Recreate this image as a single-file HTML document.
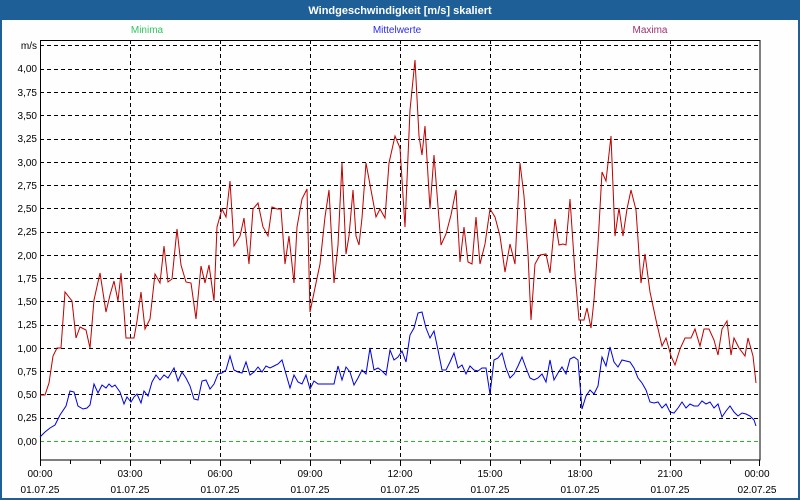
<!DOCTYPE html>
<html><head><meta charset="utf-8"><style>
html,body{margin:0;padding:0;width:800px;height:500px;overflow:hidden;background:#fff;font-family:"Liberation Sans",sans-serif}
</style></head><body>
<svg width="800" height="500" xmlns="http://www.w3.org/2000/svg" font-family="Liberation Sans, sans-serif">
<rect x="0" y="0" width="800" height="500" fill="#1e5f97"/>
<rect x="2" y="20" width="796" height="478" fill="#fdfefd"/>
<text x="400" y="14" fill="#fff" font-size="11" font-weight="bold" text-anchor="middle">Windgeschwindigkeit [m/s] skaliert</text>
<text x="147" y="33" fill="#2fc860" font-size="10" text-anchor="middle">Minima</text>
<text x="397" y="33" fill="#2a2af0" font-size="10" text-anchor="middle">Mittelwerte</text>
<text x="650" y="33" fill="#a03070" font-size="10" text-anchor="middle">Maxima</text>
<g stroke="#000" stroke-width="1" stroke-dasharray="4,3" fill="none">
<path d="M40 45.5H760M40 69.5H760M40 92.5H760M40 115.5H760M40 139.5H760M40 162.5H760M40 185.5H760M40 208.5H760M40 232.5H760M40 255.5H760M40 278.5H760M40 301.5H760M40 325.5H760M40 348.5H760M40 371.5H760M40 394.5H760M40 418.5H760"/>
<path d="M130.5 40V460M220.5 40V460M310.5 40V460M400.5 40V460M490.5 40V460M580.5 40V460M670.5 40V460"/>
</g>
<path d="M40 441.5H760" stroke="#22bb22" stroke-dasharray="4,3"/>
<rect x="40.5" y="40.5" width="719.5" height="419.5" fill="none" stroke="#000"/>
<g stroke="#000"><path d="M70.5 460v4M100.5 460v4M130.5 460v6M160.5 460v4M190.5 460v4M220.5 460v6M250.5 460v4M280.5 460v4M310.5 460v6M340.5 460v4M370.5 460v4M400.5 460v6M430.5 460v4M460.5 460v4M490.5 460v6M520.5 460v4M550.5 460v4M580.5 460v6M610.5 460v4M640.5 460v4M670.5 460v6M700.5 460v4M730.5 460v4M40.5 460v6M759.5 460v6"/></g>
<g font-size="10" fill="#000" text-anchor="end">
<text x="37" y="49">m/s</text><text x="37" y="72">4,00</text><text x="37" y="96">3,75</text><text x="37" y="119">3,50</text><text x="37" y="142">3,25</text><text x="37" y="166">3,00</text><text x="37" y="189">2,75</text><text x="37" y="212">2,50</text><text x="37" y="235">2,25</text><text x="37" y="259">2,00</text><text x="37" y="282">1,75</text><text x="37" y="305">1,50</text><text x="37" y="328">1,25</text><text x="37" y="352">1,00</text><text x="37" y="375">0,75</text><text x="37" y="398">0,50</text><text x="37" y="421">0,25</text><text x="37" y="445">0,00</text>
</g>
<g font-size="10" fill="#000" text-anchor="middle">
<text x="40" y="477">00:00</text><text x="40" y="493">01.07.25</text>
<text x="130" y="477">03:00</text><text x="130" y="493">01.07.25</text>
<text x="220" y="477">06:00</text><text x="220" y="493">01.07.25</text>
<text x="310" y="477">09:00</text><text x="310" y="493">01.07.25</text>
<text x="400" y="477">12:00</text><text x="400" y="493">01.07.25</text>
<text x="490" y="477">15:00</text><text x="490" y="493">01.07.25</text>
<text x="580" y="477">18:00</text><text x="580" y="493">01.07.25</text>
<text x="670" y="477">21:00</text><text x="670" y="493">01.07.25</text>
<text x="757" y="477">00:00</text><text x="757" y="493">02.07.25</text>
</g>
<polyline fill="none" stroke="#c00000" stroke-width="1" points="40,395 45,395 49,383 53,356 57,348 61,348 65,292 72,301 76,338 80,327 86,330 90,348 94,300 100,273 106,312 110,295 114,281 118,301 121,273 124,311 126,338 134,338 137,321 141,292 145,329 150,319 155,274 160,283 164,246 168,282 172,279 177,229 181,265 186,282 191,283 196,319 201,266 205,283 209,265 214,301 217,227 222,209 226,217 230,181 234,246 240,236 244,218 249,264 253,209 258,203 263,227 268,236 272,207 277,209 281,209 285,264 289,236 294,283 297,227 302,199 307,189 310,312 316,283 320,264 325,217 329,190 334,283 338,245 342,163 346,254 349,236 353,190 356,236 359,245 362,218 366,163 371,190 376,217 380,209 385,218 389,163 395,136 400,148 405,227 410,110 415,60 419,136 422,155 425,126 430,209 434,155 441,245 446,234 451,215 456,190 460,262 464,227 468,262 472,264 476,217 480,264 485,244 490,209 495,217 500,236 505,272 510,244 515,264 520,163 524,196 528,254 531,320 535,264 540,255 546,254 550,273 555,219 559,245 563,244 566,245 570,199 575,273 579,320 584,320 587,308 591,328 594,300 598,244 602,172 606,181 611,136 615,236 619,208 623,236 627,209 631,190 636,210 641,283 645,254 650,292 656,320 662,346 666,338 671,356 675,365 680,349 685,338 691,338 695,329 700,346 704,329 709,329 714,340 718,355 722,329 727,321 731,355 734,338 739,348 745,356 748,338 753,356 756,383"/>
<polyline fill="none" stroke="#0000e0" stroke-width="1" points="40,437 45,432 50,428 55,425 60,415 66,406 70,391 74,392 78,406 83,409 87,408 90,405 94,384 98,393 102,385 106,388 109,384 112,387 115,385 120,392 124,404 127,397 131,402 134,397 137,394 141,403 144,391 148,396 152,382 156,375 160,380 164,375 168,378 174,368 178,381 182,372 186,378 190,386 194,399 198,400 202,381 206,380 210,389 214,384 218,374 222,373 226,370 230,356 234,370 238,372 242,373 246,362 250,375 254,372 258,367 262,372 266,366 270,368 274,366 278,364 282,360 286,374 290,388 294,375 298,382 302,384 306,375 310,389 314,381 318,384 322,384 326,384 334,384 338,366 342,380 346,367 350,372 354,385 358,378 362,370 366,374 370,348 374,370 378,368 382,371 386,375 390,350 394,360 398,357 402,351 406,362 410,335 414,328 418,313 422,312 426,328 430,338 434,331 438,350 442,370 446,370 450,362 454,353 458,368 462,365 466,374 470,366 474,370 478,371 482,368 486,368 490,394 494,360 498,358 502,353 506,368 510,378 514,374 518,366 522,357 526,368 530,378 534,380 538,378 542,374 546,382 550,360 554,380 558,373 562,367 566,374 570,359 574,357 578,360 582,409 586,396 590,390 594,394 598,386 602,357 606,366 610,347 614,362 618,367 622,360 626,361 630,362 634,368 638,378 642,383 646,390 650,402 654,403 658,402 662,408 666,404 670,412 674,413 678,408 682,402 686,408 690,404 694,406 698,406 702,401 706,404 710,402 714,408 718,404 722,417 726,411 730,406 734,412 738,416 742,413 746,414 750,416 754,420 756,426"/>
</svg>
</body></html>
